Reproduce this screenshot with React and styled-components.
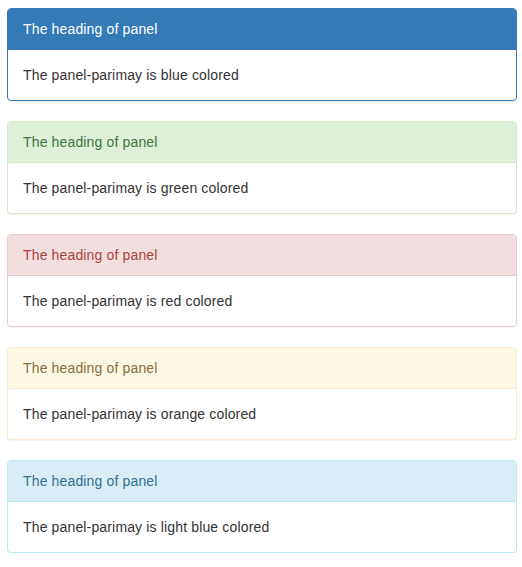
import React from 'react'
import styled, { createGlobalStyle } from 'styled-components'

const Global = createGlobalStyle`
    body {
        margin: 0;
        background: #fff;
        font-family: "Liberation Sans", Arial, sans-serif;
        font-size: 14px;
        line-height: 20px;
        letter-spacing: 0.15px;
        color: #333;
    }
`

const variants = {
    primary: { border: '#337ab7', bg: '#337ab7', color: '#fff' },
    success: { border: '#d6e9c6', bg: '#dff0d8', color: '#3c763d' },
    danger: { border: '#ebccd1', bg: '#f2dede', color: '#a94442' },
    warning: { border: '#faebcc', bg: '#fcf8e3', color: '#8a6d3b' },
    info: { border: '#bce8f1', bg: '#d9edf7', color: '#31708f' },
}

const panels = [
    { kind: 'primary', text: 'blue' },
    { kind: 'success', text: 'green' },
    { kind: 'danger', text: 'red' },
    { kind: 'warning', text: 'orange' },
    { kind: 'info', text: 'light blue' },
]

const App = () => {
    return (
        <>
            <Global />
            <Container>
                {panels.map(p => (
                    <Panel key={p.kind} $kind={p.kind}>
                        <Heading $kind={p.kind}>The heading of panel</Heading>
                        <Body>The panel-parimay is {p.text} colored</Body>
                    </Panel>
                ))}
            </Container>
        </>
    )
}

export default App

const Container = styled.div`
    padding: 8px 6px 0 7px;
    width: 510px;
    display: flex;
    flex-direction: column;
    gap: 20px;
`
const Panel = styled.div`
    border: 1px solid ${p => variants[p.$kind].border};
    border-radius: 4px;
    background: #fff;
    box-shadow: 0 1px 1px rgba(0, 0, 0, 0.05);
`
const Heading = styled.div`
    padding: 10px 15px;
    background: ${p => variants[p.$kind].bg};
    color: ${p => variants[p.$kind].color};
    border-bottom: 1px solid ${p => variants[p.$kind].border};
    border-top-left-radius: 3px;
    border-top-right-radius: 3px;
`
const Body = styled.div`
    padding: 15px;
`
